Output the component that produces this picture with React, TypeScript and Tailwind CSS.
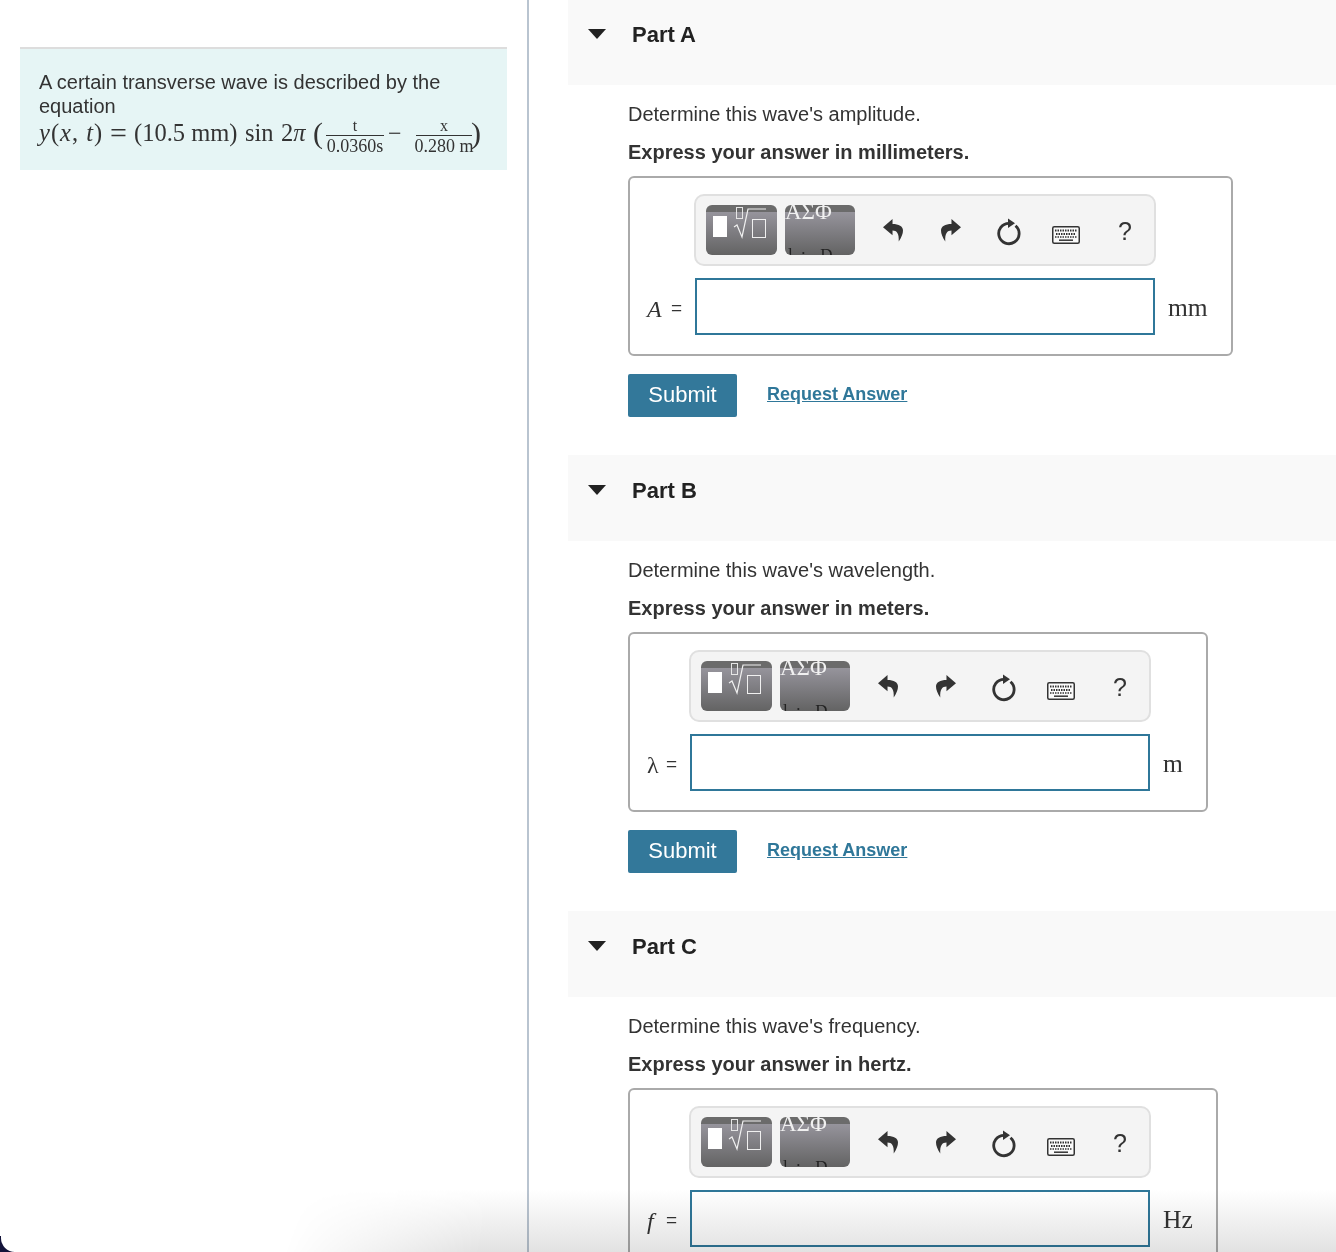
import type { ReactNode } from 'react';

const SERIF = "[font-family:'Liberation_Serif',serif]";

interface PartProps {
  title: string;
  question: string;
  express: string;
  label: ReactNode;
  labelWidth: string;
  unit: string;
}

const PARTS: PartProps[] = [
  {
    title: 'Part A',
    question: "Determine this wave's amplitude.",
    express: 'Express your answer in millimeters.',
    label: <i>A</i>,
    labelWidth: 'w-[24px]',
    unit: 'mm',
  },
  {
    title: 'Part B',
    question: "Determine this wave's wavelength.",
    express: 'Express your answer in meters.',
    label: <span>λ</span>,
    labelWidth: 'w-[19px]',
    unit: 'm',
  },
  {
    title: 'Part C',
    question: "Determine this wave's frequency.",
    express: 'Express your answer in hertz.',
    label: <i>f</i>,
    labelWidth: 'w-[19px]',
    unit: 'Hz',
  },
];

function Fraction({ top, bottom, width }: { top: string; bottom: string; width: string }) {
  return (
    <span className={`inline-flex flex-col items-center mt-[7px] ${width} ${SERIF}`}>
      <span className="text-[16px] leading-[18px] h-[18px]">{top}</span>
      <span className="block w-full h-px bg-[#333]" />
      <span className="text-[18px] leading-[20px] h-[20px] whitespace-nowrap">{bottom}</span>
    </span>
  );
}

function Equation() {
  return (
    <div className={`flex items-center h-[30px] text-[24.5px] text-[#333] whitespace-nowrap ${SERIF}`}>
      <span className="w-[71px] tracking-[1px]">
        <i>y</i>(<i>x</i>, <i>t</i>)
      </span>
      <span className="w-[24px] text-[30px] leading-none">=</span>
      <span className="w-[111px]">(10.5 mm)</span>
      <span className="w-[36px]">sin</span>
      <span className="w-[32px]">
        2<i>π</i>
      </span>
      <span className="w-[13px] text-[30px] leading-none">(</span>
      <Fraction top="t" bottom="0.0360s" width="w-[58px]" />
      <span className="w-[32px] pl-[4px] text-[24px] leading-none">−</span>
      <Fraction top="x" bottom="0.280 m" width="w-[56px]" />
      <span className="-ml-[1px] text-[30px] leading-none">)</span>
    </div>
  );
}

function RootTile() {
  return (
    <div className="relative w-[71px] h-[50px] rounded-[6px] bg-[linear-gradient(#6b6b6b_0,#6b6b6b_7px,#96949c_7px,#636363_100%)]">
      <svg viewBox="0 0 71 50" className="absolute inset-0 w-[71px] h-[50px]">
        <rect x="7" y="11" width="14" height="21" fill="#fff" />
        <rect x="30.5" y="2.5" width="6" height="11" fill="none" stroke="#e6e6e6" />
        <path d="M28 22 L31 20 L36 32 L42 4 H60" fill="none" stroke="#f0f0f0" strokeWidth="1.2" />
        <rect x="46.5" y="14.5" width="13" height="18" fill="none" stroke="#f0f0f0" />
      </svg>
    </div>
  );
}

function GreekTile() {
  return (
    <div
      className={`relative w-[70px] h-[50px] rounded-[6px] overflow-hidden bg-[linear-gradient(#6b6b6b_0,#6b6b6b_7px,#96949c_7px,#636363_100%)] ${SERIF}`}
    >
      <span className="absolute left-0 -top-[6px] text-[23px] leading-[26px] text-[#f0f0f0] whitespace-nowrap">
        ΑΣΦ
      </span>
      <span className="absolute left-[3px] -bottom-[9px] text-[17px] leading-[18px] text-[#222] whitespace-nowrap tracking-[2px]">
        l : &nbsp;D
      </span>
    </div>
  );
}

function ReplyArrow({ flip }: { flip?: boolean }) {
  return (
    <svg viewBox="0 0 21 24" className={`w-[20px] h-[23px] ${flip ? '-scale-x-100' : ''}`}>
      <path d="M10 0 L0 8.5 L10 17 V12 C14.5 12 17 15 16.5 23.5 C19.5 19 21 15.5 21 12 C21 7.5 16.5 5.2 10 5.2 Z" fill="#333" />
    </svg>
  );
}

function Toolbar() {
  return (
    <div className="col-start-2 -mx-px h-[72px] flex items-center pl-[10px] rounded-[10px] border-2 border-[#e0e0e0] bg-[#f4f4f4] text-[#333]">
      <RootTile />
      <div className="ml-[8px]">
        <GreekTile />
      </div>
      <div className="ml-[9px] flex items-center">
        <div className="w-[58px] flex justify-center">
          <ReplyArrow />
        </div>
        <div className="w-[58px] flex justify-center">
          <ReplyArrow flip />
        </div>
        <div className="w-[58px] flex justify-center mt-[4px]">
          <svg viewBox="0 0 26 28" className="w-[26px] h-[28px]">
            <path d="M13 5.3 A10.2 10.2 0 1 0 19.5 7.7" fill="none" stroke="#333" strokeWidth="2.8" />
            <path d="M12 0.5 L19 5.3 L12 10 Z" fill="#333" />
          </svg>
        </div>
        <div className="w-[58px] flex justify-center mt-[10px] pr-[2px]">
          <svg viewBox="0 0 28 18" className="w-[28px] h-[18px]">
            <rect x="0.75" y="0.75" width="26.5" height="16.5" rx="1.5" fill="#fafafa" stroke="#333" strokeWidth="1.5" />
            <path d="M3 4.5 H25" stroke="#333" strokeWidth="2" strokeDasharray="1.5 1" />
            <path d="M4 8 H24" stroke="#333" strokeWidth="2" strokeDasharray="1.5 1" />
            <path d="M3 11 H25" stroke="#333" strokeWidth="1.5" strokeDasharray="1.5 1" />
            <path d="M7 14.2 H21" stroke="#333" strokeWidth="1.5" />
          </svg>
        </div>
        <div className="w-[58px] mt-[2px] text-center text-[25px] leading-none [font-family:'Liberation_Sans',sans-serif]">?</div>
      </div>
    </div>
  );
}

function Part({ title, question, express, label, labelWidth, unit }: PartProps) {
  return (
    <section className="pb-[38px]">
      <div className="h-[86px] bg-[#f9f9f9] flex items-start pt-[22px] pl-[20px]">
        <svg viewBox="0 0 18 10" className="w-[18px] h-[10px] mt-[8px]">
          <path d="M0 0 H18 L9 10 Z" fill="#222" />
        </svg>
        <h2 className="ml-[26px] text-[22px] leading-[28px] font-bold text-[#222]">{title}</h2>
      </div>
      <div className="pl-[60px]">
        <p className="mt-[17px] text-[20px] leading-[24px] text-[#333]">{question}</p>
        <p className="mt-[14px] text-[20px] leading-[24px] font-bold text-[#333]">{express}</p>
        <div className="mt-[12px] w-fit rounded-[6px] border-2 border-[#aaa] pt-[16px] pb-[19px] pl-[17px] pr-[23px] grid grid-cols-[auto_460px_auto] gap-y-[12px] items-center">
          <Toolbar />
          <div className={`col-start-1 pr-[13px] pt-[4px] flex items-center text-[#333] text-[24px] whitespace-nowrap ${SERIF}`}>
            <span className={labelWidth}>{label}</span>
            <span className="w-[11px] text-[19px] [font-family:'Liberation_Sans',sans-serif]">=</span>
          </div>
          <div className="h-[57px] border-2 border-[#2f7799] bg-white" />
          <div className={`pl-[13px] pt-[3px] text-[25.5px] text-[#333] ${SERIF}`}>{unit}</div>
        </div>
        <div className="mt-[18px] flex items-center">
          <button className="w-[109px] h-[43px] pb-[2px] rounded-[2px] bg-[#33789a] text-white text-[22px]">Submit</button>
          <a className="ml-[30px] -mt-[3px] text-[18px] font-bold text-[#2f7799] underline">Request Answer</a>
        </div>
      </div>
    </section>
  );
}

export default function App() {
  return (
    <div className="relative h-[1252px] overflow-hidden bg-white flex [font-family:'Liberation_Sans',sans-serif]">
      <aside className="w-[529px] shrink-0 border-r-2 border-[#b9c4d0] pt-[47px] pl-[20px] pr-[20px]">
        <div className="h-[123px] border-t-2 border-[#dddddd] bg-[#e6f5f5] pt-[21px] pl-[19px] pr-[19px]">
          <p className="text-[20px] leading-[24px] text-[#333]">A certain transverse wave is described by the equation</p>
          <Equation />
        </div>
      </aside>
      <main className="ml-[39px] -mt-px flex-1">
        {PARTS.map((part) => (
          <Part key={part.title} {...part} />
        ))}
      </main>

      {/* fade at the bottom edge of the window */}
      <div className="absolute bottom-0 inset-x-0 h-[62px] pointer-events-none mix-blend-multiply bg-[linear-gradient(#ffffff,#e2e2e2)] [mask-image:linear-gradient(105deg,transparent_290px,black_480px)]" />
      <div className="absolute bottom-0 left-0 w-[14px] h-[16px] bg-[#14143a]">
        <div className="w-full h-full bg-white rounded-bl-[14px] ml-[1px]" />
      </div>
    </div>
  );
}
